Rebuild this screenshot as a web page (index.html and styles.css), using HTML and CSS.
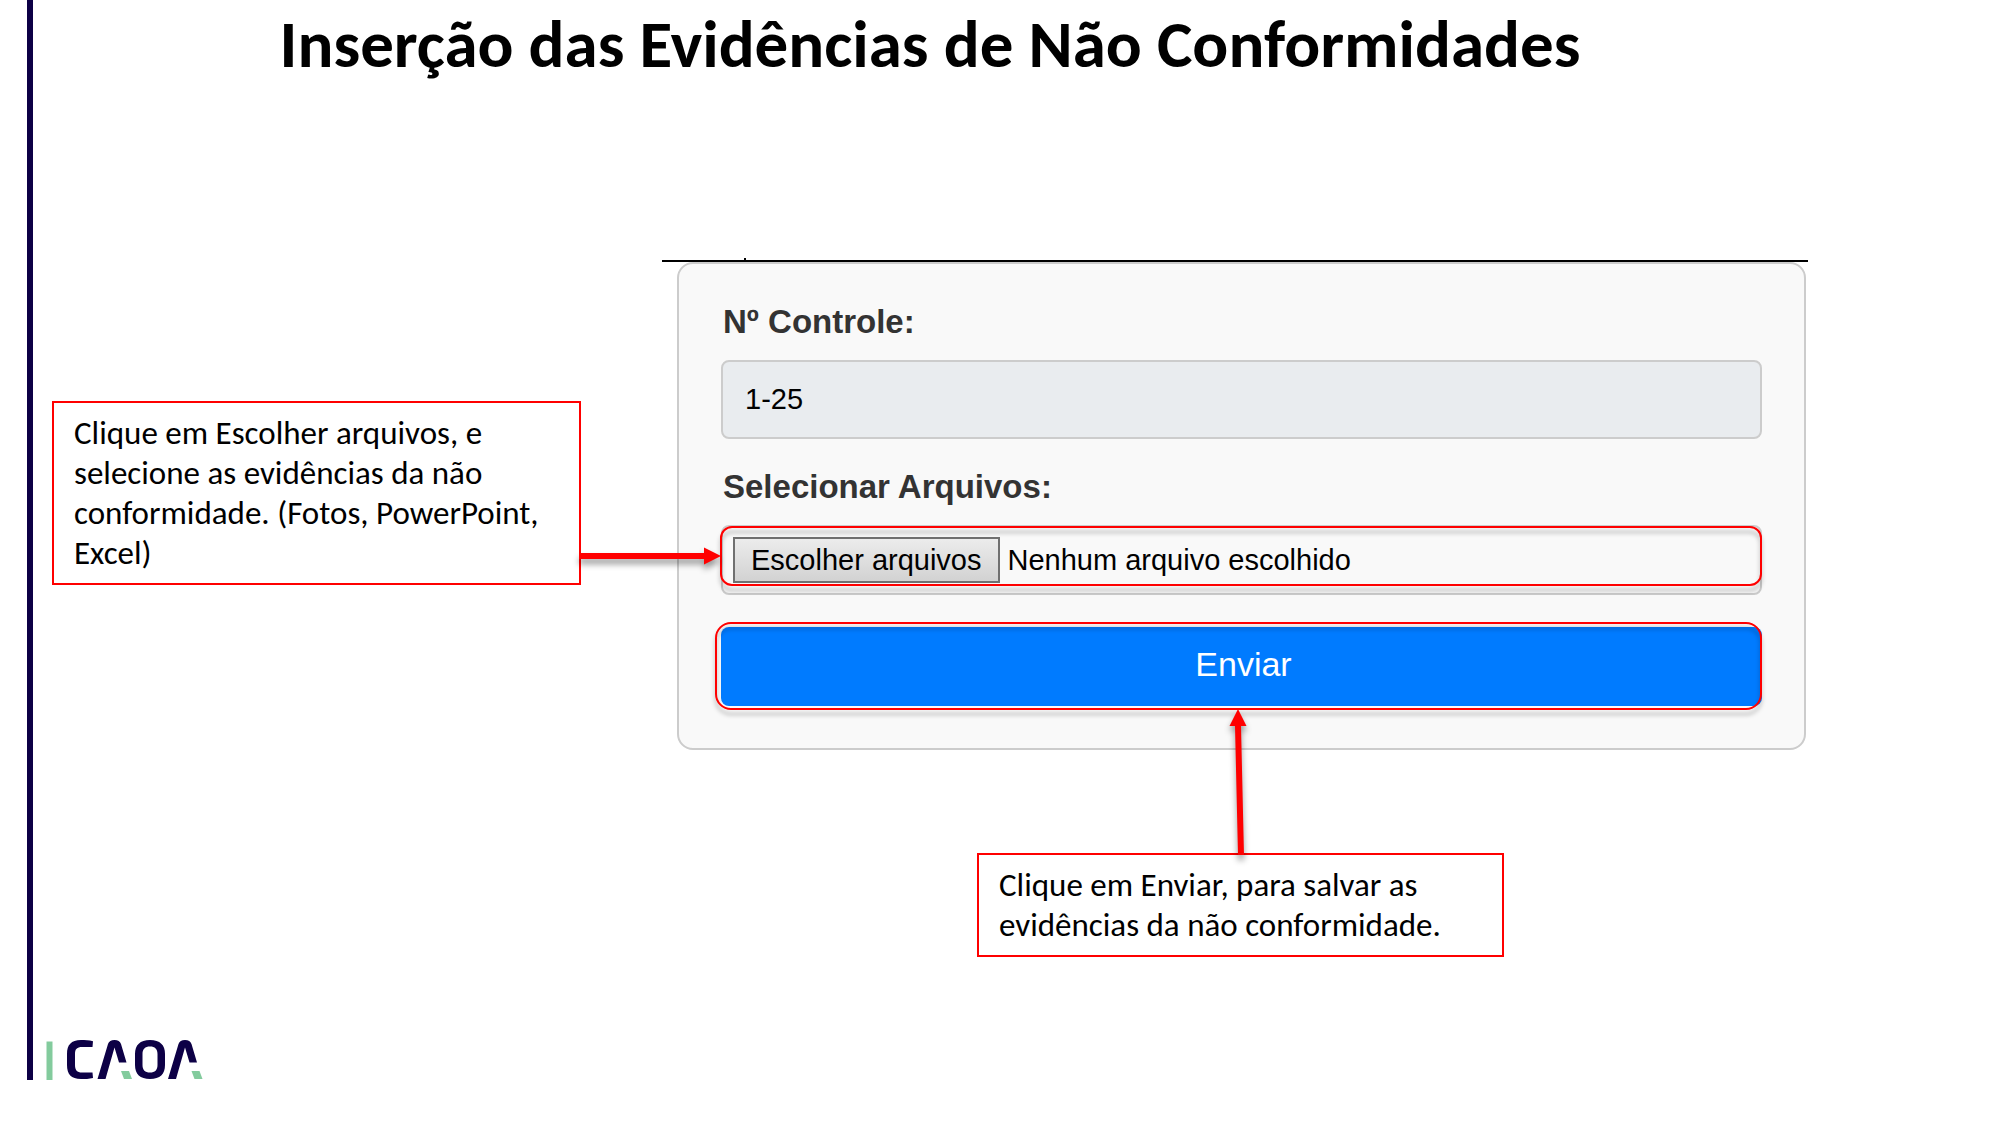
FILE: index.html
```html
<!DOCTYPE html>
<html lang="pt-BR">
<head>
<meta charset="utf-8">
<meta name="viewport" content="width=device-width, initial-scale=1">
<title>Inserção das Evidências de Não Conformidades</title>
<link rel="stylesheet" href="styles.css">
</head>
<body>
<div class="slide">
  <h1 class="title">Inserção das Evidências de Não Conformidades</h1>
  <main class="content">
    <aside class="callout callout-files">
      <p>Clique em Escolher arquivos, e selecione as evidências da não conformidade. (Fotos, PowerPoint, Excel)</p>
      <svg class="arrow arrow-right" width="142" height="18" viewBox="0 0 142 18" aria-hidden="true">
        <path d="M0 6H125V0.500L142 9L125 17.500V12H0Z" fill="#f00"/>
      </svg>
    </aside>
    <section class="workspace">
      <form class="panel">
        <label class="label" for="controle">Nº Controle:</label>
        <input class="input" id="controle" type="text" value="1-25" readonly>
        <label class="label label-files" for="arquivos">Selecionar Arquivos:</label>
        <div class="file">
          <span class="file-button">Escolher arquivos</span>
          <span class="file-name">Nenhum arquivo escolhido</span>
          <input class="file-input" id="arquivos" type="file" multiple>
          <span class="mark mark-file"></span>
        </div>
        <div class="submit">
          <button class="button" type="submit">Enviar</button>
          <span class="mark mark-submit"></span>
        </div>
      </form>
      <aside class="callout callout-send">
        <p>Clique em Enviar, para salvar as evidências da não conformidade.</p>
        <svg class="arrow arrow-up" width="30" height="146" viewBox="0 0 30 146" aria-hidden="true">
          <path d="M12 0L20.500 17H15L18 146H12L9 17H3.500Z" fill="#f00"/>
        </svg>
      </aside>
    </section>
  </main>
  <footer class="footer">
    <svg class="logo" width="158" height="40" viewBox="0 0 158 40" role="img" aria-label="CAOA">
      <path d="M0.500 1.500H6.500V40H0.500Z" fill="#83cb9d"/>
      <g fill="#0d0046">
        <path d="M47 1.200L46.500 7H36C31 7 29 9 29 14V25C29 30 31 32.500 36 32.500H46.500L47 38C43 39 39 39 35 39C25 39 21 34 21 25V14C21 5 25 0 35 0C39 0 43 0 47 1.200Z"/>
        <path d="M51.500 39L62 4C63 1.500 65 0 68.500 0C72 0 74 1.500 75 4L80.500 22.500H73L68.500 7.500L59.500 39Z"/>
        <path fill-rule="evenodd" d="M104 0C114 0 119 5 119 14V25C119 34 114 39 104 39C94 39 89 34 89 25V14C89 5 94 0 104 0ZM104 6.500C99 6.500 96.500 9 96.500 14V25C96.500 30 99 32.500 104 32.500C109 32.500 111.500 30 111.500 25V14C111.500 9 109 6.500 104 6.500Z"/>
        <path d="M122 39L132.500 4C133.500 1.500 135.500 0 139 0C142.500 0 144.500 1.500 145.500 4L151 22.500H143.500L139 7.500L130 39Z"/>
      </g>
      <path d="M75 31H83L86 39H78ZM145.500 31H153.500L156.500 39H148.500Z" fill="#83cb9d"/>
    </svg>
  </footer>
</div>
</body>
</html>
```
FILE: styles.css
```css
* {
  box-sizing: border-box;
}

body {
  margin: 0;
  background: #fff;
  color: #000;
  font-family: Carlito, Lato, sans-serif;
}

p {
  margin: 0;
}

.slide {
  display: flex;
  flex-direction: column;
  min-height: calc(100vh - 45px);
  margin: 0 192px 45px 27px;
  padding-left: 19px;
  border-left: 6px solid #0d0046;
}

.title {
  margin: 0;
  padding-top: 8px;
  text-align: center;
  font-size: 67px;
  line-height: 72px;
}

.content {
  display: grid;
  grid-template-columns: 529fr 1146fr;
  column-gap: 81px;
  align-items: start;
  margin-top: 180px;
}

.callout {
  position: relative;
  padding: 10px 20px;
  border: 2px solid #f00;
  background: #fff;
  font-size: 33px;
  line-height: 40px;
}

.callout-files {
  z-index: 1;
  margin-top: 141px;
}

.callout-send {
  width: 46%;
  margin: 103px auto 0 315px;
}

.arrow {
  position: absolute;
  overflow: visible;
  filter: drop-shadow(0 5px 3px rgba(0, 0, 0, 0.4));
}

.arrow-right {
  left: 100%;
  bottom: 18px;
}

.arrow-up {
  left: 247px;
  bottom: 100%;
}

.workspace {
  position: relative;
  border-top: 2px solid #000;
}

.workspace::before {
  content: "";
  position: absolute;
  top: -4px;
  left: 82px;
  width: 2px;
  height: 2px;
  background: #000;
}

.panel {
  display: flex;
  flex-direction: column;
  margin: 0 2px 0 15px;
  padding: 38px 42px 42px;
  border: 2px solid #ccc;
  border-radius: 16px;
  background: #f9f9f9;
  font-family: "Liberation Sans", Arial, sans-serif;
}

.label {
  margin-bottom: 18px;
  padding-left: 2px;
  color: #333;
  font-size: 33px;
  font-weight: bold;
  line-height: 40px;
}

.label-files {
  margin-top: 28px;
}

.input {
  height: 79px;
  padding: 0 22px;
  border: 2px solid #ccc;
  border-radius: 8px;
  background: #e9ecef;
  color: #000;
  font: 29px "Liberation Sans", Arial, sans-serif;
}

.file {
  position: relative;
  display: flex;
  align-items: center;
  gap: 8px;
  height: 70px;
  padding: 0 10px;
  border: 2px solid #ccc;
  border-radius: 8px;
  font-size: 29px;
}

.file-button {
  padding: 0 16px;
  border: 2px solid #707070;
  background: linear-gradient(#ececec, #d2d2d2);
  line-height: 42px;
}

.file-input {
  position: absolute;
  inset: 0;
  width: 100%;
  opacity: 0;
}

.submit {
  position: relative;
  margin-top: 32px;
}

.button {
  display: block;
  width: 100%;
  height: 79px;
  padding: 0 0 4px 4px;
  border: 0;
  border-radius: 8px;
  background: #007bff;
  color: #fff;
  font: 34px "Liberation Sans", Arial, sans-serif;
}

.mark {
  position: absolute;
  border: 2px solid #f00;
  pointer-events: none;
  filter: drop-shadow(0 5px 2px rgba(0, 0, 0, 0.3));
}

.mark-file {
  inset: -1px -2px 7px -3px;
  border-radius: 12px;
}

.mark-submit {
  inset: -5px 0 -4px -6px;
  border-radius: 16px;
}

.footer {
  margin-top: auto;
  margin-left: -6px;
  line-height: 0;
}
```
